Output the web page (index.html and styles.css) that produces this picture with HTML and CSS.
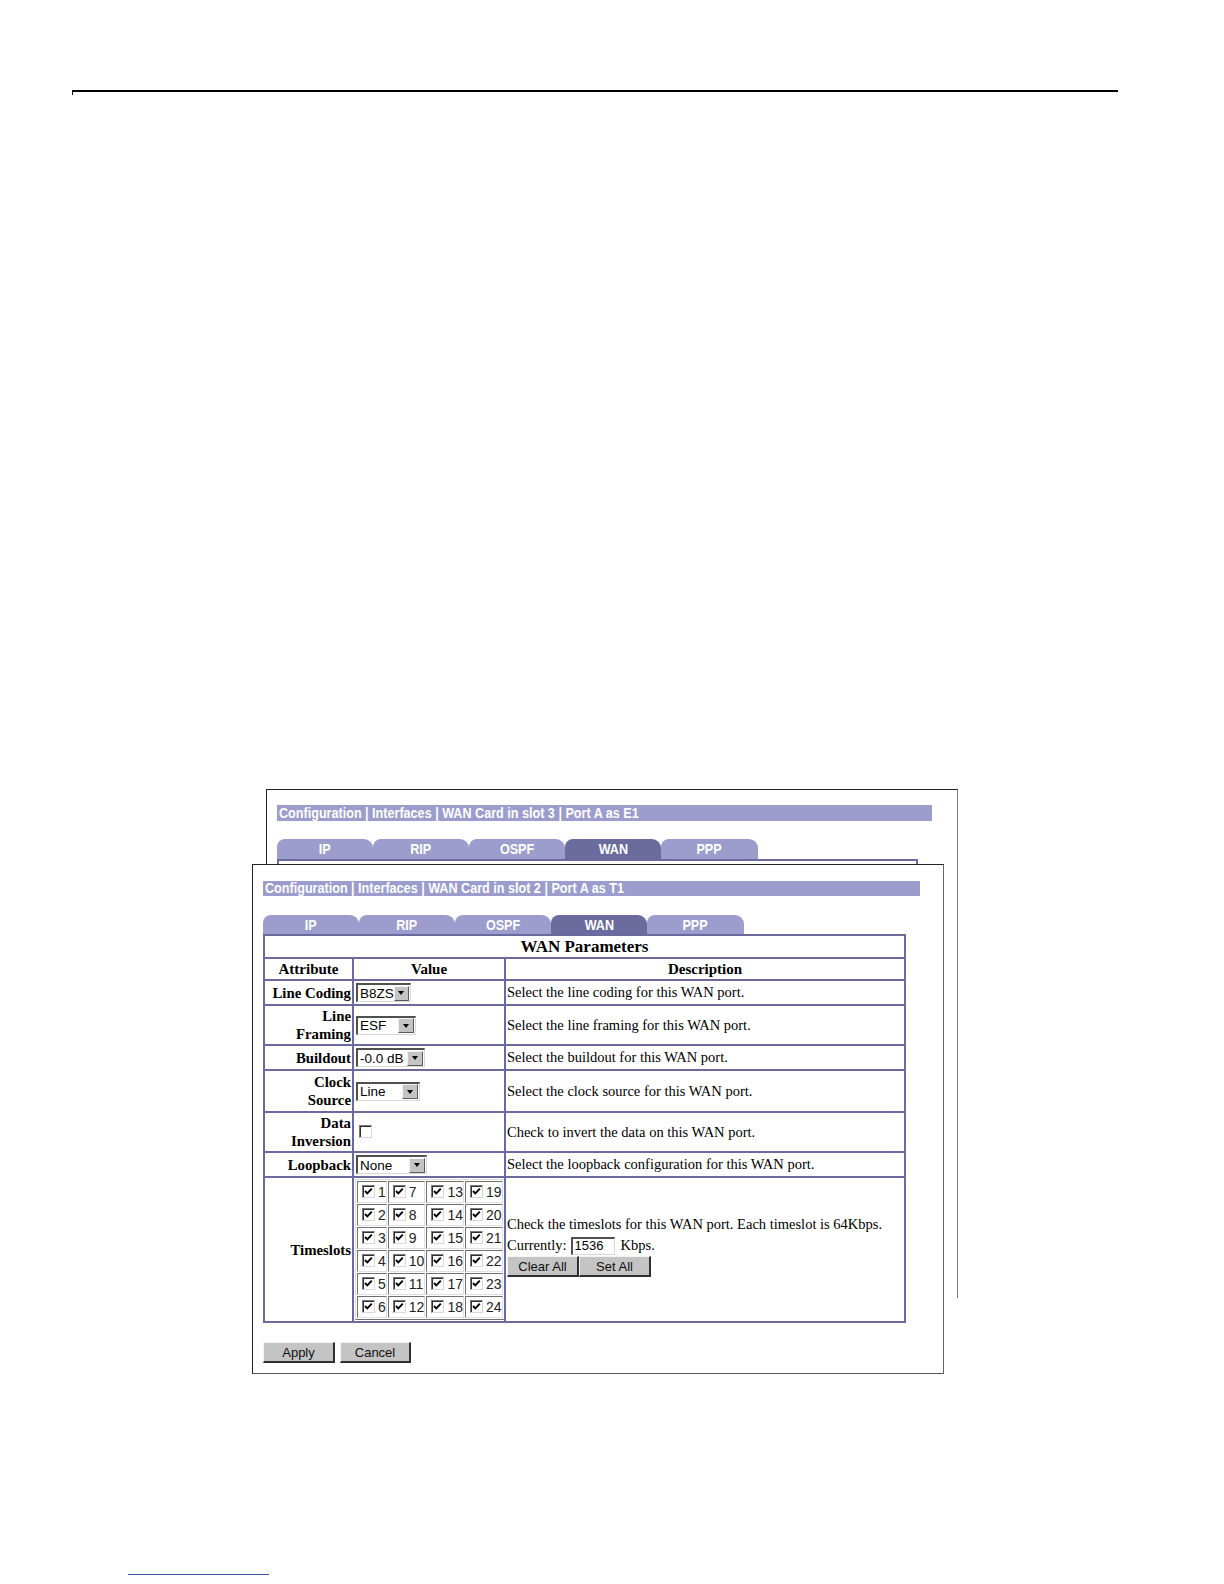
FILE: index.html
```html
<!DOCTYPE html>
<html>
<head>
<meta charset="utf-8">
<title>WAN Parameters</title>
<link rel="stylesheet" href="styles.css">
</head>
<body>
<div class="page">
  <div class="rule"></div>
  <div class="figure">
    <div class="panel back">
      <div class="crumb"><span class="cond">Configuration | Interfaces | WAN Card in slot 3 | Port A as E1</span></div>
      <div class="tabs">
        <div class="tab"><span class="cond">IP</span></div>
        <div class="tab"><span class="cond">RIP</span></div>
        <div class="tab"><span class="cond">OSPF</span></div>
        <div class="tab active"><span class="cond">WAN</span></div>
        <div class="tab last"><span class="cond">PPP</span></div>
      </div>
      <div class="backbox"></div>
    </div>

    <div class="panel front">
      <div class="crumb"><span class="cond">Configuration | Interfaces | WAN Card in slot 2 | Port A as T1</span></div>
      <div class="tabs tabs-front">
        <div class="tab"><span class="cond">IP</span></div>
        <div class="tab"><span class="cond">RIP</span></div>
        <div class="tab"><span class="cond">OSPF</span></div>
        <div class="tab active"><span class="cond">WAN</span></div>
        <div class="tab last"><span class="cond">PPP</span></div>
      </div>
      <table class="params">
        <colgroup>
          <col class="c-attr">
          <col class="c-val">
          <col class="c-desc">
        </colgroup>
        <tr class="r-title"><th colspan="3" class="title">WAN Parameters</th></tr>
        <tr class="r-head"><th>Attribute</th><th>Value</th><th>Description</th></tr>
        <tr class="r-25">
          <td class="lbl">Line Coding</td>
          <td class="val"><span class="sel w55"><span class="opt">B8ZS</span><span class="arr"></span></span></td>
          <td class="desc">Select the line coding for this WAN port.</td>
        </tr>
        <tr class="r-40">
          <td class="lbl">Line<br>Framing</td>
          <td class="val"><span class="sel w60"><span class="opt">ESF</span><span class="arr"></span></span></td>
          <td class="desc">Select the line framing for this WAN port.</td>
        </tr>
        <tr class="r-25">
          <td class="lbl">Buildout</td>
          <td class="val"><span class="sel w69"><span class="opt">-0.0 dB</span><span class="arr"></span></span></td>
          <td class="desc">Select the buildout for this WAN port.</td>
        </tr>
        <tr class="r-42">
          <td class="lbl">Clock<br>Source</td>
          <td class="val"><span class="sel w64"><span class="opt">Line</span><span class="arr"></span></span></td>
          <td class="desc">Select the clock source for this WAN port.</td>
        </tr>
        <tr class="r-40">
          <td class="lbl">Data<br>Inversion</td>
          <td class="val"><span class="cb"></span></td>
          <td class="desc">Check to invert the data on this WAN port.</td>
        </tr>
        <tr class="r-25">
          <td class="lbl">Loopback</td>
          <td class="val"><span class="sel w71"><span class="opt">None</span><span class="arr"></span></span></td>
          <td class="desc">Select the loopback configuration for this WAN port.</td>
        </tr>
        <tr class="r-ts">
          <td class="lbl">Timeslots</td>
          <td class="val ts-cell">
            <table class="slots">
              <tr><td class="s1"><span class="cb on"></span>1</td><td class="s2"><span class="cb on"></span>7</td><td class="s3"><span class="cb on"></span>13</td><td class="s4"><span class="cb on"></span>19</td></tr>
              <tr><td><span class="cb on"></span>2</td><td><span class="cb on"></span>8</td><td><span class="cb on"></span>14</td><td><span class="cb on"></span>20</td></tr>
              <tr><td><span class="cb on"></span>3</td><td><span class="cb on"></span>9</td><td><span class="cb on"></span>15</td><td><span class="cb on"></span>21</td></tr>
              <tr><td><span class="cb on"></span>4</td><td><span class="cb on"></span>10</td><td><span class="cb on"></span>16</td><td><span class="cb on"></span>22</td></tr>
              <tr><td><span class="cb on"></span>5</td><td><span class="cb on"></span>11</td><td><span class="cb on"></span>17</td><td><span class="cb on"></span>23</td></tr>
              <tr><td><span class="cb on"></span>6</td><td><span class="cb on"></span>12</td><td><span class="cb on"></span>18</td><td><span class="cb on"></span>24</td></tr>
            </table>
          </td>
          <td class="desc ts-desc">
            <div>Check the timeslots for this WAN port. Each timeslot is 64Kbps.</div>
            <div class="current">Currently: <span class="inp">1536</span> Kbps.</div>
            <div class="btnrow"><span class="btn b-clear">Clear All</span><span class="btn b-set">Set All</span></div>
          </td>
        </tr>
      </table>
      <div class="actions">
        <span class="btn b-apply">Apply</span>
        <span class="btn b-cancel">Cancel</span>
      </div>
    </div>
  </div>
  <div class="footline"></div>
</div>
</body>
</html>
```

FILE: styles.css
```css
html, body {
  margin: 0;
  padding: 0;
  background: #ffffff;
}

.page {
  position: relative;
  width: 1224px;
  padding-top: 90px;
  font-family: "Liberation Serif", "Times New Roman", serif;
  color: #000;
}

.rule {
  margin-left: 72px;
  width: 1045px;
  height: 3px;
  border-top: 2px solid #000;
  border-left: 1px solid #000;
}

.figure {
  position: relative;
  margin: 694px 0 0 252px;
  width: 710px;
}

.panel {
  box-sizing: border-box;
  width: 692px;
  background: #fff;
  border: 1px solid #222;
}

.back {
  margin-left: 14px;
  height: 509px;
  padding: 15px 0 0 10px;
  border-right-color: #777;
  border-bottom: none;
  overflow: hidden;
}

.front {
  position: absolute;
  left: 0;
  top: 75px;
  height: 510px;
  padding: 16px 0 0 10px;
  border-right-color: #666;
  border-bottom-color: #555;
}

.cond {
  display: inline-block;
  transform: scaleX(0.9);
  white-space: nowrap;
}

.crumb {
  box-sizing: border-box;
  width: 655px;
  height: 16px;
  padding-left: 2px;
  background: #9c9ccd;
  color: #fff;
  font-family: "Liberation Sans", Arial, sans-serif;
  font-weight: bold;
  font-size: 14px;
  line-height: 16px;
  white-space: nowrap;
  overflow: hidden;
}

.crumb .cond {
  transform-origin: 0 50%;
}

.front .crumb {
  width: 657px;
  height: 15px;
  line-height: 15px;
}

.tabs {
  display: flex;
  margin-top: 18px;
  height: 20px;
}

.tabs-front {
  margin-top: 19px;
  height: 19px;
}

.tab {
  width: 96px;
  height: 100%;
  background: #9c9ccd;
  border-radius: 8px 9px 0 0;
  color: #fff;
  text-align: center;
  font-family: "Liberation Sans", Arial, sans-serif;
  font-weight: bold;
  font-size: 14px;
  line-height: 21px;
}

.tabs-front .tab {
  line-height: 20px;
}

.tab.active {
  background: #6b6b9e;
}

.tab.last {
  width: 97px;
}

.backbox {
  box-sizing: border-box;
  width: 641px;
  height: 120px;
  border: 2px solid #6a6a9e;
  border-bottom: none;
}

/* parameter table */
.params {
  border-collapse: collapse;
  width: 641px;
  table-layout: fixed;
  font-size: 14.5px;
}

.c-attr { width: 89px; }
.c-val { width: 152px; }
.c-desc { width: 400px; }

.params > tbody > tr > td,
.params > tbody > tr > th {
  border: 2px solid #6a6a9e;
  padding: 0 1px;
  vertical-align: middle;
}

.params th {
  font-weight: bold;
  text-align: center;
  font-size: 15px;
}

.params th.title {
  font-size: 17px;
}

.r-title { height: 23px; }
.r-head { height: 22px; }
.r-25 { height: 25px; }
.r-40 { height: 40px; }
.r-42 { height: 42px; }
.r-ts { height: 145px; }

.lbl {
  text-align: right;
  font-weight: bold;
  font-size: 14.8px;
  line-height: 18px;
  white-space: nowrap;
}

.val {
  text-align: left;
}

.desc {
  line-height: 19px;
  white-space: nowrap;
}

.params > tbody > tr > td.ts-desc {
  padding-bottom: 7px;
}

/* fake select */
.sel {
  box-sizing: border-box;
  display: inline-flex;
  align-items: center;
  justify-content: space-between;
  height: 19px;
  margin-left: 1px;
  vertical-align: middle;
  background: #fff;
  border-top: 2px solid #505050;
  border-left: 2px solid #505050;
  border-right: 1px solid #d8d8d8;
  border-bottom: 1px solid #d8d8d8;
  padding-right: 1px;
}

.w55 { width: 55px; }
.w60 { width: 60px; }
.w69 { width: 69px; }
.w64 { width: 64px; }
.w71 { width: 71px; }

.opt {
  font-family: "Liberation Sans", Arial, sans-serif;
  font-size: 13.5px;
  line-height: 15px;
  padding-left: 2px;
  color: #000;
}

.arr {
  box-sizing: border-box;
  width: 16px;
  height: 15px;
  background: #c4c4c4;
  border-top: 1px solid #f2f2f2;
  border-left: 1px solid #f2f2f2;
  border-right: 1px solid #5a5a5a;
  border-bottom: 1px solid #5a5a5a;
  display: flex;
  align-items: center;
  justify-content: center;
}

.arr::after {
  content: "";
  width: 0;
  height: 0;
  border-left: 3.5px solid transparent;
  border-right: 3.5px solid transparent;
  border-top: 4px solid #000;
}

/* checkbox */
.cb {
  box-sizing: border-box;
  display: inline-block;
  width: 13px;
  height: 13px;
  margin-left: 4px;
  vertical-align: -1px;
  background: #fff;
  border-top: 1px solid #7a7a7a;
  border-left: 1px solid #7a7a7a;
  border-right: 1px solid #d8d8d8;
  border-bottom: 1px solid #d8d8d8;
  box-shadow: inset 1px 1px 0 #303030;
}

.cb.on {
  margin-left: 0;
  margin-right: 3px;
  background: #fff url("data:image/svg+xml;utf8,<svg xmlns='http://www.w3.org/2000/svg' width='11' height='11' viewBox='0 0 11 11'><path d='M2 5 L4.3 7.4 L8.8 2.6' fill='none' stroke='black' stroke-width='1.9'/></svg>") no-repeat 0 0;
}

/* timeslot grid */
.ts-cell {
  padding: 0 !important;
}

.slots {
  border-collapse: separate;
  border-spacing: 1px;
  border-top: 1px solid #e0e0e0;
  border-left: 1px solid #e0e0e0;
  border-right: 1px solid #707070;
  border-bottom: 1px solid #707070;
  margin: 0 0 0 1px;
  width: 148px;
  font-family: "Liberation Sans", Arial, sans-serif;
  font-size: 14px;
  color: #222;
}

.slots td {
  height: 20px;
  padding: 0 0 0 4px;
  white-space: nowrap;
  border-top: 1px solid #707070;
  border-left: 1px solid #707070;
  border-right: 1px solid #e0e0e0;
  border-bottom: 1px solid #e0e0e0;
  line-height: 18px;
}

.s1 { width: 26px; }
.s2 { width: 31px; }
.s3 { width: 33px; }
.s4 { width: 32px; }

.current {
  margin-top: 2px;
  display: flex;
  align-items: center;
}

.inp {
  box-sizing: border-box;
  display: inline-block;
  width: 44px;
  height: 18px;
  margin: 0 6px 0 4px;
  padding-left: 2px;
  border-top: 2px solid #505050;
  border-left: 2px solid #505050;
  border-right: 1px solid #d8d8d8;
  border-bottom: 1px solid #d8d8d8;
  font-family: "Liberation Sans", Arial, sans-serif;
  font-size: 13px;
  line-height: 14px;
}

.btnrow {
  display: flex;
  margin-top: 1px;
}

.btn {
  box-sizing: border-box;
  display: inline-flex;
  align-items: center;
  justify-content: center;
  height: 21px;
  background: #c4c4c4;
  border-top: 1px solid #f4f4f4;
  border-left: 1px solid #f4f4f4;
  border-right: 2px solid #303030;
  border-bottom: 2px solid #303030;
  font-family: "Liberation Sans", Arial, sans-serif;
  font-size: 13px;
  color: #111;
}

.b-clear { width: 72px; }
.b-set { width: 72px; }

.actions {
  display: flex;
  gap: 5px;
  margin-top: 19px;
}

.b-apply { width: 72px; }
.b-cancel { width: 71px; }

.footline {
  margin: 276px 0 0 128px;
  width: 141px;
  border-top: 1px solid #3a4fb0;
}
```
